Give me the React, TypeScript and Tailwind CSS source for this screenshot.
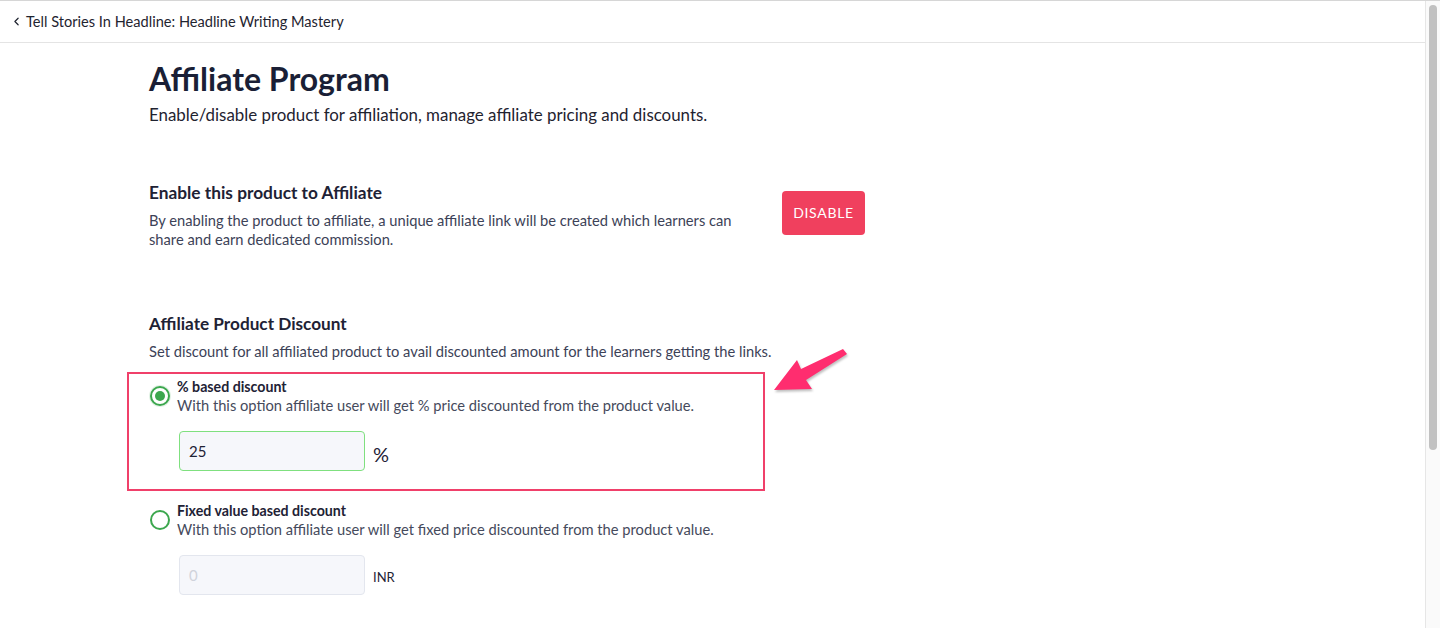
import { ChevronLeft } from 'lucide-react';

const font = { fontFamily: 'Lato, "Noto Sans", sans-serif' };

interface IDiscountOptionProps {
    title: string;
    description: string;
    checked: boolean;
    value: string;
    unit: string;
    unitClassName: string;
    inputClassName: string;
}

const DiscountOption: React.FC<IDiscountOptionProps> = (props) => {
    const { title, description, checked, value, unit, unitClassName, inputClassName } = props;

    return (
        <div className="flex flex-col">
            <div className="flex flex-row gap-[7px]">
                <span
                    className={
                        'ml-px mt-[8px] flex h-5 w-5 shrink-0 items-center justify-center rounded-full border-2 border-[#3ca74e] bg-white ' +
                        (checked ? 'shadow-[0_0_0_1px_rgba(60,167,78,0.15)]' : '')
                    }
                >
                    {checked && <span className="h-[10px] w-[10px] rounded-full bg-[#3ca74e]" />}
                </span>
                <div className="flex flex-col">
                    <p className="text-[14.2px] font-bold leading-[18px] text-[#1e2235]">{title}</p>
                    <p className="text-[14.7px] leading-[19px] text-[#454a5c]">{description}</p>
                </div>
            </div>
            <div className="ml-[30px] mt-4 flex flex-row items-center gap-2">
                <div
                    className={
                        'flex h-10 w-[186px] items-center rounded-[4px] border bg-[#f6f7fb] px-[9px] text-[15px] ' +
                        inputClassName
                    }
                >
                    {value}
                </div>
                <span className={unitClassName}>{unit}</span>
            </div>
        </div>
    );
};

export default function App() {
    return (
        <div className="relative h-[628px] w-[1440px] overflow-hidden border-t border-[#d6d6d6] bg-white" style={font}>
            <div className="flex h-full flex-row">
                <div className="flex flex-1 flex-col">
                    <div className="flex h-[42px] shrink-0 items-center gap-[3px] border-b border-[#e4e4e4] pl-[10px] text-[14.6px] text-[#1f2430]">
                        <ChevronLeft className="h-[13px] w-[13px]" strokeWidth={2.2} />
                        <span>Tell Stories In Headline: Headline Writing Mastery</span>
                    </div>

                    <div className="ml-[149px] mt-[18px] flex flex-col">
                        <h1 className="text-[32px] font-bold leading-[36px] text-[#1a1f36]">Affiliate Program</h1>
                        <p className="mt-[6px] text-[16.9px] leading-6 text-[#1f2330]">
                            Enable/disable product for affiliation, manage affiliate pricing and discounts.
                        </p>

                        <div className="mt-[54px] flex flex-row items-center">
                            <div className="mr-[43px] flex w-[590px] flex-col gap-[6px]">
                                <p className="text-[17.3px] font-bold leading-6 text-[#1e2235]">
                                    Enable this product to Affiliate
                                </p>
                                <p className="text-[14.7px] leading-[19px] text-[#3c4257]">
                                    By enabling the product to affiliate, a unique affiliate link will be created which
                                    learners can share and earn dedicated commission.
                                </p>
                            </div>
                            <button className="-mt-[5px] h-11 w-[83px] rounded-[4px] bg-[#f0405e] text-[14px] tracking-[0.05em] text-white">
                                DISABLE
                            </button>
                        </div>

                        <p className="mt-[63px] text-[17.2px] font-bold leading-6 text-[#1e2235]">
                            Affiliate Product Discount
                        </p>
                        <p className="mt-[6px] text-[14.7px] leading-[19px] text-[#3c4257]">
                            Set discount for all affiliated product to avail discounted amount for the learners getting
                            the links.
                        </p>

                        <div className="-ml-[22px] mt-[11px] w-[638px] border-2 border-[#f0406a] pb-[18px] pl-5 pt-[4px]">
                            <DiscountOption
                                title="% based discount"
                                description="With this option affiliate user will get % price discounted from the product value."
                                checked={true}
                                value="25"
                                unit="%"
                                unitClassName="text-[20px] text-[#1e2235] mt-[6px]"
                                inputClassName="border-[#7fe07f] text-[#1e2235]"
                            />
                        </div>

                        <div className="mt-[11px]">
                            <DiscountOption
                                title="Fixed value based discount"
                                description="With this option affiliate user will get fixed price discounted from the product value."
                                checked={false}
                                value="0"
                                unit="INR"
                                unitClassName="text-[13px] text-[#1e2235] mt-[6px]"
                                inputClassName="border-[#e3e6ee] text-[#d0d3db]"
                            />
                        </div>
                    </div>
                </div>

                <div className="flex w-[15px] shrink-0 justify-center border-l border-[#e6e6e6] bg-[#fafafa] pt-[4px]">
                    <div className="h-[445px] w-[8px] rounded-full bg-[#c1c1c1]" />
                </div>
            </div>

            <svg
                className="absolute left-[768px] top-[344px] drop-shadow-[1px_2px_1px_rgba(0,0,0,0.25)]"
                width="84"
                height="52"
                viewBox="768 344 84 52"
            >
                <polygon
                    points="774,389 797,359 801,368 843,348 847,353 806,379 812,388"
                    fill="#ff2d6f"
                    strokeLinejoin="round"
                />
            </svg>
        </div>
    );
}
